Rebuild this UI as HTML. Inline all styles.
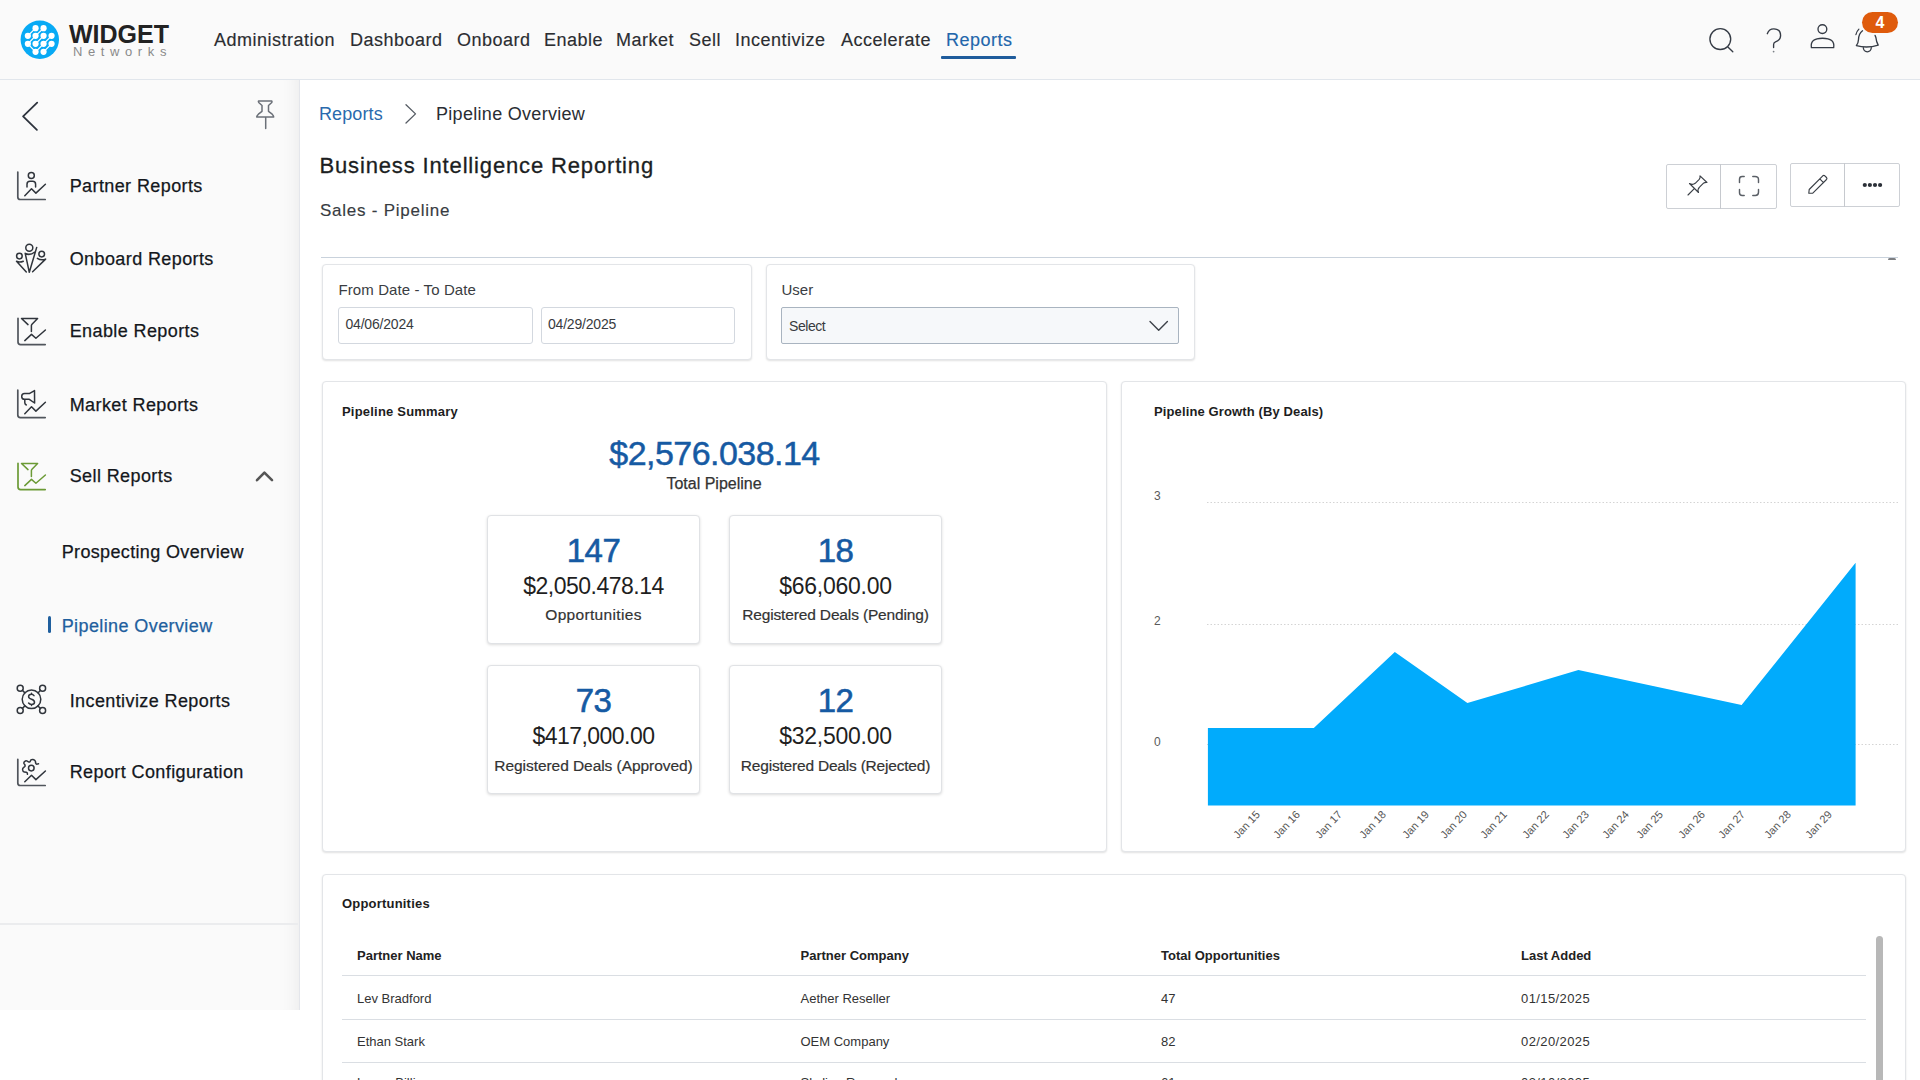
<!DOCTYPE html>
<html><head><meta charset="utf-8">
<style>
*{box-sizing:border-box;margin:0;padding:0}
html,body{width:1920px;height:1080px;overflow:hidden;background:#fff;font-family:"Liberation Sans",sans-serif;color:#1f2328}
.abs{position:absolute}
.t{position:absolute;white-space:nowrap;line-height:1}
#hdr{position:absolute;left:0;top:0;width:1920px;height:80px;background:#fafafa;border-bottom:1px solid #e1e6ec}
.nav{position:absolute;top:30.5px;font-size:18px;color:#2b2d31;letter-spacing:0.5px;-webkit-text-stroke:0.15px currentColor}
#side{position:absolute;left:0;top:80px;width:300px;height:930px;background:#fafafa;box-shadow:inset -1px 0 0 #e4e6eb, inset -18px 0 16px -14px rgba(0,0,0,0.06)}
.si{position:absolute;left:70px;margin-top:-79.2px;margin-left:0.7px;font-size:18px;color:#14171c;letter-spacing:0.4px;-webkit-text-stroke:0.25px #14171c}
svg{position:absolute;overflow:visible}
.ic{fill:none;stroke:#2f343b;stroke-width:1.5;stroke-linecap:round;stroke-linejoin:round}
.card{position:absolute;background:#fff;border:1px solid #e3e5e8;border-radius:4px;box-shadow:0 1px 2px rgba(0,0,0,0.12)}
.btg{border:1px solid #cdd0d5;border-radius:2px;background:#fff}
.cl{font-size:15px;color:#3a3d42}
.cv{font-size:14px;color:#383b40;letter-spacing:-0.2px}
.inp{border:1px solid #d3d8df;border-radius:3px;background:#fff}
.ct{font-size:13px;font-weight:bold;color:#1d1d1d}
.sc{border-color:#e0e2e5;box-shadow:0 1px 3px rgba(0,0,0,0.14)}
.sn{width:213px;text-align:center;font-size:33px;color:#165aa3;letter-spacing:-0.5px;-webkit-text-stroke:0.6px #165aa3}
.sm{width:213px;text-align:center;font-size:23px;color:#1f1f1f;letter-spacing:-0.5px;margin-top:0.8px}
.sl{width:213px;text-align:center;font-size:15.5px;color:#333;margin-top:1px;-webkit-text-stroke:0.2px #333}
.yl{font-size:12px;color:#5a5a5a}
.xl{font-size:11px;color:#555;transform:rotate(-47deg);transform-origin:100% 0;width:33px;text-align:right}
.th{font-size:13px;font-weight:bold;color:#222}
.td{font-size:13px;color:#333}
.rl{left:342px;width:1524px;height:1px;background:#dadee3}
</style></head><body>

<div id="hdr">
  <svg style="left:0;top:0" width="80" height="80" viewBox="0 0 80 80">
    <circle cx="39.8" cy="39.7" r="19.2" fill="#08aaf5"/>
    <g fill="#fff"><circle cx="27.85" cy="35.85" r="3.1"/><circle cx="27.85" cy="43.85" r="3.1"/><circle cx="35.56" cy="28.15" r="3.1"/><circle cx="35.56" cy="35.85" r="3.1"/><circle cx="35.56" cy="43.85" r="3.1"/><circle cx="35.56" cy="51.85" r="3.1"/><circle cx="43.56" cy="28.15" r="3.1"/><circle cx="43.56" cy="35.85" r="3.1"/><circle cx="43.56" cy="43.85" r="3.1"/><circle cx="43.56" cy="51.85" r="3.1"/><circle cx="51.56" cy="35.85" r="3.1"/><circle cx="51.56" cy="43.85" r="3.1"/></g>
    <path d="M27.85 35.85 L35.56 28.15 M27.85 43.85 L35.56 35.85 M35.56 35.85 L43.56 28.15 M35.56 43.85 L43.56 35.85 M35.56 51.85 L43.56 43.85 M43.56 43.85 L51.56 35.85 M43.56 51.85 L51.56 43.85 M27.85 43.85 L35.56 51.85 " stroke="#fff" stroke-width="1.3"/>
  </svg>
  <div class="t" style="left:69px;top:22px;font-size:25px;font-weight:bold;color:#222">WIDGET</div>
  <div class="t" style="left:73px;top:45px;font-size:13px;color:#8a8a8a;letter-spacing:5.6px">Networks</div>

  <div class="t nav" style="left:214px">Administration</div>
  <div class="t nav" style="left:350px">Dashboard</div>
  <div class="t nav" style="left:457px">Onboard</div>
  <div class="t nav" style="left:544px">Enable</div>
  <div class="t nav" style="left:616px">Market</div>
  <div class="t nav" style="left:689px">Sell</div>
  <div class="t nav" style="left:735px">Incentivize</div>
  <div class="t nav" style="left:841px">Accelerate</div>
  <div class="t nav" style="left:946px;color:#2266ab">Reports</div>
  <svg style="left:0;top:0" width="80" height="80" viewBox="0 0 80 80">
    <g class="ic" style="stroke:#353b45;stroke-width:1.35">
      <circle cx="1720.3" cy="39.1" r="10.4"/>
      <path d="M1727.9 46.9 L1732.8 51.8"/>
      <path d="M1767.3 33.7 Q1769 28.8 1773.8 28.8 Q1780.6 28.8 1780.6 35.5 Q1780.6 40 1775.5 41.8 Q1773.6 42.6 1773.6 44.5 V47.6"/>
      <circle cx="1822.4" cy="29.1" r="4.4"/>
      <path d="M1811.4 47.6 Q1809.8 38.2 1822.5 38.2 Q1835.2 38.2 1833.7 47.6 Z"/>
      <path d="M1862.5 30.8 Q1858.8 33.5 1858.5 39.5 Q1858.2 43.8 1856.4 45.6 Q1867 48.6 1878.2 45.1 Q1876.2 41.5 1875.9 37.5 L1875.1 35.4"/>
      <path d="M1863.3 47.6 A4 4.2 0 0 0 1871.3 47.6"/>
      <path d="M1855.9 34.6 Q1856.6 31.5 1858.9 29.2" style="stroke-width:1.2"/>
    </g>
    <circle cx="1773.6" cy="51.6" r="0.9" fill="#7a7f86"/>
  </svg>
  <div class="abs" style="left:1862px;top:12px;width:36px;height:21px;border-radius:11px;background:#df5b0c"></div>
  <div class="t" style="left:1862px;top:14.5px;width:36px;text-align:center;font-size:16px;font-weight:bold;color:#fff">4</div>
  <div class="abs" style="left:941px;top:56px;width:75px;height:3px;background:#1f5c9c;border-radius:1px"></div>
</div>

<div id="side">
  <svg style="left:0;top:0" width="300" height="60" viewBox="0 80 300 60">
    <path class="ic" d="M37.2 102.6 L23.1 116.3 L36.9 129.8" style="stroke:#2d333d;stroke-width:1.8"/>
    <path class="ic" d="M258.5 100.9 H271.5 Q272.5 101.5 271.5 102.8 L268.5 105.5 V111.3 L272.2 114.2 Q273.7 115.7 273.7 116.9 H256.7 Q256.9 115.6 258.4 114.2 L262 111.3 V105.5 L259 102.8 Q258 101.5 258.5 100.9 Z M265.7 117 V128.5" style="stroke:#6b7078;stroke-width:1.5"/>
  </svg>
  <svg style="left:0;top:0" width="300" height="930" viewBox="0 80 300 930">
   <g class="ic" style="stroke:#30353c">
    <g transform="translate(10,165)">
      <path d="M7.8 7 V32 Q7.8 34.5 10.3 34.5 H35.2" style="stroke:#50555c;stroke-width:1.7"/>
      <circle cx="21.3" cy="10.4" r="3"/>
      <path d="M17 21.9 V19.3 Q17 16.3 20 16.3 H22.6 Q25.6 16.3 25.6 19.3 V21.9"/>
      <path d="M14.8 30.7 L21.5 23.7 L25.9 28.1 L35.4 19.3"/>
    </g>
    <g transform="translate(10,238)">
      <circle cx="19.3" cy="9.8" r="3.5"/>
      <circle cx="9.4" cy="18.1" r="2.8"/>
      <circle cx="31.7" cy="16.1" r="2.8"/>
      <path d="M15.2 15.3 L19.3 34.3 L26.7 9.4 M15.2 15.5 Q20 17.8 24.8 14"/>
      <path d="M13.3 23.2 Q9.8 24.8 6.5 23.3 L16.3 34"/>
      <path d="M27.4 20.3 Q31 22.7 35.6 21.1 L22.6 33.8"/>
    </g>
    <g transform="translate(10,310)">
      <path d="M8 8.3 V32 Q8 34.6 10.6 34.6 H35.2" style="stroke:#50555c;stroke-width:1.7"/>
      <path d="M18 14.6 L11.5 8.5 H27.6 L22 14.2 Q21.4 14.8 21.4 15.6 V21.5"/>
      <path d="M14.8 30.6 L21.5 24.4 L25.9 28.3 L35.4 20"/>
    </g>
    <g transform="translate(10,383)">
      <path d="M7.8 7.2 V32 Q7.8 34.6 10.4 34.6 H35.2" style="stroke:#50555c;stroke-width:1.7"/>
      <path d="M24.5 7.6 L19.3 10.6 H14.6 Q11.7 10.6 11.7 13.4 Q11.7 16.3 14.6 16.3 H19.3 L24.6 20 Z M14.8 16.8 V19.8 Q14.8 21.2 16.3 22"/>
      <path d="M14.8 30.7 L21.5 23.7 L25.9 28.1 L35.4 19.3"/>
    </g>
    <g transform="translate(10,455)" style="stroke:#6b9a35">
      <path d="M8 8.3 V32 Q8 34.6 10.6 34.6 H35.2" style="stroke-width:1.7"/>
      <path d="M18 14.6 L11.5 8.5 H27.6 L22 14.2 Q21.4 14.8 21.4 15.6 V21.5"/>
      <path d="M14.8 30.6 L21.5 24.4 L25.9 28.3 L35.4 20"/>
    </g>
    <g transform="translate(10,678)">
      <circle cx="21.5" cy="21.3" r="9.3"/>
      <circle cx="10.2" cy="10.2" r="3"/><circle cx="32.6" cy="10.2" r="3"/>
      <circle cx="10.2" cy="32.6" r="3"/><circle cx="32.6" cy="32.6" r="3"/>
      <path d="M12.3 12.3 L14.9 14.9 M30.5 12.3 L28 14.9 M12.3 30.5 L14.9 27.9 M30.5 30.5 L28 27.9"/>
      <path d="M24 17.6 Q23 16.2 21.5 16.2 Q18.6 16.2 18.6 18.6 Q18.6 20.5 21.5 21.3 Q24.5 22.1 24.5 24.3 Q24.5 26.4 21.5 26.4 Q19.6 26.4 18.6 25 M21.5 15.3 V16.2 M21.5 26.4 V27.6"/>
    </g>
    <g transform="translate(10,750)">
      <path d="M7.8 9.3 V33 Q7.8 35.5 10.3 35.5 H35.2" style="stroke:#50555c;stroke-width:1.7"/>
      <circle cx="21.3" cy="18.1" r="2.8"/>
      <path d="M17.4 24.3 Q17.6 22.6 16.3 22.3 L14.2 22 Q12.8 21.8 12.6 19.8 Q12.5 18.4 13.5 17.6 L14.8 16.5 Q15.4 15.6 14.7 14.5 L13.9 13.3 Q13.6 12.3 14.8 11.4 Q16 10.4 17.3 11.2 L18.4 11.9 Q19.8 12.5 20.3 11.2 L20.8 10 Q21.4 9.3 23 9.4 Q24.8 9.8 25.4 11.2 L25.6 13 Q26 14.4 27.3 14.1 L28.5 13.7"/>
      <path d="M14.8 31.7 L21.5 25.2 L25.9 29.6 L35.4 21"/>
    </g>
    <path d="M257 480.2 L264.4 472.6 L272 480.2" style="stroke:#555;stroke-width:2.6"/>
   </g>
  </svg>
  <div class="t si" style="top:176.3px;left:69px">Partner Reports</div>
  <div class="t si" style="top:249.6px;left:69px">Onboard Reports</div>
  <div class="t si" style="top:321.6px;left:69px">Enable Reports</div>
  <div class="t si" style="top:395.1px;left:69px">Market Reports</div>
  <div class="t si" style="top:466.1px;left:69px">Sell Reports</div>
  <div class="t si" style="top:542.5px;left:61px;letter-spacing:0.35px">Prospecting Overview</div>
  <div class="t si" style="top:615.8px;left:61px;color:#1f5f9e;-webkit-text-stroke-color:#1f5f9e">Pipeline Overview</div>
  <div class="abs" style="left:48px;top:536px;width:3px;height:17px;background:#1f5f9e;border-radius:2px"></div>
  <div class="t si" style="top:690.7px;left:69px">Incentivize Reports</div>
  <div class="t si" style="top:762.6px;left:69px">Report Configuration</div>
  <div class="abs" style="left:0;top:843px;width:298px;height:2px;background:#ebecee"></div>
</div>

<div id="main">
  <div class="t" style="left:319px;top:105px;font-size:18px;color:#2a6aad;letter-spacing:0.1px">Reports</div>
  <svg style="left:0;top:0" width="10" height="10" viewBox="0 0 10 10"><path class="ic" d="M406 104.8 L415.5 113.9 L406 123" style="stroke:#555b63;stroke-width:1.3"/></svg>
  <div class="t" style="left:436px;top:105px;font-size:18px;color:#2a2d33;letter-spacing:0.3px">Pipeline Overview</div>
  <div class="t" style="left:319.5px;top:155px;font-size:22px;color:#1b1e22;letter-spacing:0.85px;-webkit-text-stroke:0.3px #1b1e22">Business Intelligence Reporting</div>
  <div class="t" style="left:320px;top:202.1px;font-size:17px;color:#383c42;letter-spacing:0.75px;-webkit-text-stroke:0.15px #383c42">Sales - Pipeline</div>

  <div class="abs btg" style="left:1666px;top:164px;width:111px;height:45px"></div>
  <div class="abs btg" style="left:1790px;top:163px;width:110px;height:44px"></div>
  <div class="abs" style="left:1720px;top:164px;width:1px;height:45px;background:#c6c9ce"></div>
  <div class="abs" style="left:1844px;top:163px;width:1px;height:44px;background:#c6c9ce"></div>
  <svg style="left:0;top:0" width="10" height="10" viewBox="0 0 10 10">
    <g class="ic" style="stroke:#3a3f46;stroke-width:1.15">
      <path d="M1688 195 L1694.3 188.7"/>
      <path d="M1689.5 183.5 L1698.5 192.5 Q1697.2 189.3 1699.5 187.1 L1703.3 183.3 Q1705.3 182.2 1707 182.5 L1700 175.8 Q1700.4 177.8 1699.2 179.3 L1695.2 183.3 Q1692.8 185.2 1689.5 183.5 Z"/>
      <path d="M1739.5 182.5 V179.2 Q1739.5 176.5 1742.2 176.5 H1744.2 M1752.8 176.5 H1755 Q1758.5 176.5 1758.5 179.5 V182.5 M1758.5 189.5 V192.3 Q1758.5 195.5 1755.3 195.5 H1752.8 M1744.2 195.5 H1742.2 Q1739.5 195.5 1739.5 192.8 V189.5" style="stroke:#5a5f66;stroke-width:1.45"/>
      <path d="M1808.8 193.2 L1809.2 189.5 L1822.8 175.8 Q1823.8 174.9 1824.8 175.8 L1826.5 177.5 Q1827.4 178.5 1826.5 179.5 L1812.8 193.1 Z M1819.8 178.9 L1823.5 182.6"/>
    </g>
    <g fill="#2b3038"><circle cx="1864.8" cy="185" r="2.1"/><circle cx="1869.9" cy="185" r="2.1"/><circle cx="1875" cy="185" r="2.1"/><circle cx="1880.1" cy="185" r="2.1"/></g>
  </svg>

  <div class="abs" style="left:321px;top:257px;width:1577px;height:1px;background:#c9d2dc"></div>
  <div class="abs" style="left:1888px;top:258px;width:8px;height:2px;background:#7d7f83;border-radius:4px 4px 1px 1px"></div>

  <div class="card" style="left:322px;top:264px;width:430px;height:96px"></div>
  <div class="t cl" style="left:338.5px;top:281.5px;letter-spacing:0.1px">From Date - To Date</div>
  <div class="abs inp" style="left:338px;top:307px;width:195px;height:37px"></div>
  <div class="abs inp" style="left:541px;top:307px;width:194px;height:37px"></div>
  <div class="t cv" style="left:345.5px;top:317.3px">04/06/2024</div>
  <div class="t cv" style="left:548px;top:317.3px">04/29/2025</div>

  <div class="card" style="left:766px;top:264px;width:429px;height:96px"></div>
  <div class="t cl" style="left:781.5px;top:281.5px">User</div>
  <div class="abs" style="left:781px;top:307px;width:398px;height:37px;background:#f6f8fa;border:1px solid #a9b4c0;border-radius:2px"></div>
  <div class="t cv" style="left:789px;top:318.6px;letter-spacing:-0.45px">Select</div>
  <svg style="left:0;top:0" width="10" height="10" viewBox="0 0 10 10"><path class="ic" d="M1150 321.5 L1158.7 330.2 L1167.4 321.5" style="stroke:#3d4249;stroke-width:1.4"/></svg>

  <div class="card" style="left:322px;top:381px;width:785px;height:471px"></div>
  <div class="t ct" style="left:342px;top:404.5px;letter-spacing:0.2px">Pipeline Summary</div>
  <div class="t" style="left:0;width:1429px;text-align:center;top:435.7px;font-size:34px;color:#165aa3;letter-spacing:-0.55px;-webkit-text-stroke:0.5px #165aa3">$2,576.038.14</div>
  <div class="t" style="left:0;width:1428px;text-align:center;top:476px;font-size:16px;color:#333;-webkit-text-stroke:0.25px #333">Total Pipeline</div>

  <div class="card sc" style="left:487px;top:515px;width:213px;height:129px"></div>
  <div class="card sc" style="left:729px;top:515px;width:213px;height:129px"></div>
  <div class="card sc" style="left:487px;top:665px;width:213px;height:129px"></div>
  <div class="card sc" style="left:729px;top:665px;width:213px;height:129px"></div>

  <div class="t sn" style="left:487px;top:534px">147</div>
  <div class="t sm" style="left:487px;top:574px">$2,050.478.14</div>
  <div class="t sl" style="left:487px;top:606px;letter-spacing:0.33px">Opportunities</div>
  <div class="t sn" style="left:729px;top:534px">18</div>
  <div class="t sm" style="left:729px;top:574px;letter-spacing:-0.24px">$66,060.00</div>
  <div class="t sl" style="left:729px;top:606px;letter-spacing:-0.15px">Registered Deals (Pending)</div>
  <div class="t sn" style="left:487px;top:684px">73</div>
  <div class="t sm" style="left:487px;top:724px;letter-spacing:-0.55px">$417,000.00</div>
  <div class="t sl" style="left:487px;top:757px;letter-spacing:-0.06px">Registered Deals (Approved)</div>
  <div class="t sn" style="left:729px;top:684px">12</div>
  <div class="t sm" style="left:729px;top:724px;letter-spacing:-0.24px">$32,500.00</div>
  <div class="t sl" style="left:729px;top:757px;letter-spacing:-0.2px">Registered Deals (Rejected)</div>

  <div class="card" style="left:1121px;top:381px;width:785px;height:471px"></div>
  <div class="t ct" style="left:1154px;top:404.5px;letter-spacing:0.12px">Pipeline Growth (By Deals)</div>
  <div class="t yl" style="left:1154px;top:490px">3</div>
  <div class="t yl" style="left:1154px;top:615px">2</div>
  <div class="t yl" style="left:1154px;top:736px">0</div>
  <svg style="left:0;top:0" width="10" height="10" viewBox="0 0 10 10">
    <g stroke="#d4d4d4" stroke-width="1" stroke-dasharray="1.5 2">
      <path d="M1207 502.5 H1898 M1207 624.5 H1898 M1207 744.5 H1898"/>
    </g>
    <path d="M1207.9 805.5 V727.9 H1313.8 L1394.8 651.9 L1467.4 703 L1578.4 670.1 L1741.6 705.1 L1855.6 562.8 V805.5 Z" fill="#01abfc"/>
  </svg>
  <div class="t xl" style="left:1221.0px;top:809px">Jan 15</div>
  <div class="t xl" style="left:1261.0px;top:809px">Jan 16</div>
  <div class="t xl" style="left:1303.0px;top:809px">Jan 17</div>
  <div class="t xl" style="left:1347.0px;top:809px">Jan 18</div>
  <div class="t xl" style="left:1389.6px;top:809px">Jan 19</div>
  <div class="t xl" style="left:1427.5px;top:809px">Jan 20</div>
  <div class="t xl" style="left:1467.6px;top:809px">Jan 21</div>
  <div class="t xl" style="left:1510.0px;top:809px">Jan 22</div>
  <div class="t xl" style="left:1550.0px;top:809px">Jan 23</div>
  <div class="t xl" style="left:1590.0px;top:809px">Jan 24</div>
  <div class="t xl" style="left:1623.7px;top:809px">Jan 25</div>
  <div class="t xl" style="left:1666.0px;top:809px">Jan 26</div>
  <div class="t xl" style="left:1706.0px;top:809px">Jan 27</div>
  <div class="t xl" style="left:1752.0px;top:809px">Jan 28</div>
  <div class="t xl" style="left:1792.5px;top:809px">Jan 29</div>

  <div class="card" style="left:322px;top:874px;width:1584px;height:260px"></div>
  <div class="t ct" style="left:342px;top:896.5px;letter-spacing:0.2px">Opportunities</div>
  <div class="t th" style="left:357px;top:949px">Partner Name</div>
  <div class="t th" style="left:800.5px;top:949px">Partner Company</div>
  <div class="t th" style="left:1161px;top:949px">Total Opportunities</div>
  <div class="t th" style="left:1521px;top:949px">Last Added</div>
  <div class="abs rl" style="top:975px"></div>
  <div class="t td" style="left:357px;top:992px">Lev Bradford</div>
  <div class="t td" style="left:800.5px;top:992px">Aether Reseller</div>
  <div class="t td" style="left:1161px;top:992px">47</div>
  <div class="t td" style="left:1521px;top:992px;letter-spacing:0.4px">01/15/2025</div>
  <div class="abs rl" style="top:1018.5px"></div>
  <div class="t td" style="left:357px;top:1035px">Ethan Stark</div>
  <div class="t td" style="left:800.5px;top:1035px">OEM Company</div>
  <div class="t td" style="left:1161px;top:1035px">82</div>
  <div class="t td" style="left:1521px;top:1035px;letter-spacing:0.4px">02/20/2025</div>
  <div class="abs rl" style="top:1062px"></div>
  <div class="t td" style="left:357px;top:1076.3px">Lucas Billings</div>
  <div class="t td" style="left:800.5px;top:1076.3px">Skyline Research</div>
  <div class="t td" style="left:1161px;top:1076.3px">61</div>
  <div class="t td" style="left:1521px;top:1076.3px;letter-spacing:0.4px">03/10/2025</div>
  <div class="abs" style="left:1875.5px;top:936px;width:7.5px;height:160px;background:#b8b8b8;border-radius:4px"></div>
</div>


</body></html>
